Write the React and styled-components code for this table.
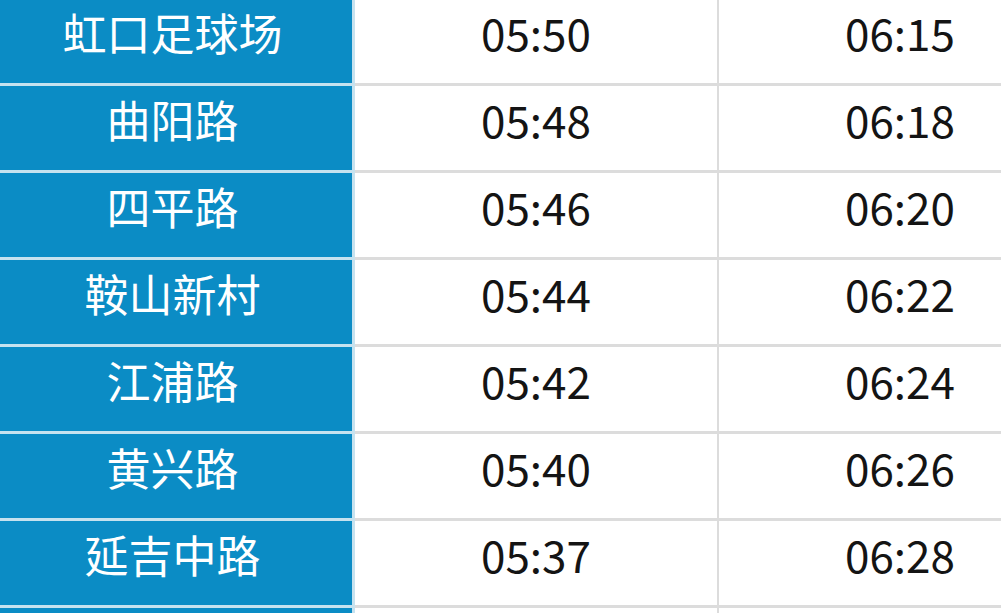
import React from 'react'
import styled, { createGlobalStyle } from 'styled-components'

const GlobalStyle = createGlobalStyle`
  html, body {
    margin: 0;
    padding: 0;
    background: #ffffff;
    overflow: hidden;
  }
  body {
    font-family: "Noto Sans CJK SC", "Noto Sans", sans-serif;
  }
`

const Table = styled.div`
  margin-top: -1px;
  margin-left: -7px;
  width: 1090px;
  display: flex;
  flex-direction: column;
`

const Row = styled.div`
  display: grid;
  grid-template-columns: 362px 364px 364px;
  height: ${p => (p.$stub ? '8px' : '87px')};
`

const Cell = styled.div`
  display: flex;
  align-items: center;
  justify-content: center;
  box-sizing: border-box;
  padding-bottom: 18px;
  font-size: 44px;
  line-height: 1;
  border-right: 2px solid ${p => (p.$station ? '#c6e2ef' : '#dcdcdc')};
  border-bottom: 3px solid ${p => (p.$station ? '#c6e2ef' : '#dcdcdc')};
  background: ${p => (p.$station ? '#0b8cc5' : '#ffffff')};
  color: ${p => (p.$station ? '#ffffff' : '#141414')};
  ${p => p.$station && 'border-right-width: 3px;'}
`

const rows = [
  ['虹口足球场', '05:50', '06:15'],
  ['曲阳路', '05:48', '06:18'],
  ['四平路', '05:46', '06:20'],
  ['鞍山新村', '05:44', '06:22'],
  ['江浦路', '05:42', '06:24'],
  ['黄兴路', '05:40', '06:26'],
  ['延吉中路', '05:37', '06:28'],
]

const App = () => {
  return (
    <>
      <GlobalStyle />
      <Table>
        {rows.map(([station, first, last]) => (
          <Row key={station}>
            <Cell $station>{station}</Cell>
            <Cell>{first}</Cell>
            <Cell>{last}</Cell>
          </Row>
        ))}
        {/* next row only just shows at the bottom edge */}
        <Row $stub>
          <Cell $station />
          <Cell />
          <Cell />
        </Row>
      </Table>
    </>
  )
}

export default App
